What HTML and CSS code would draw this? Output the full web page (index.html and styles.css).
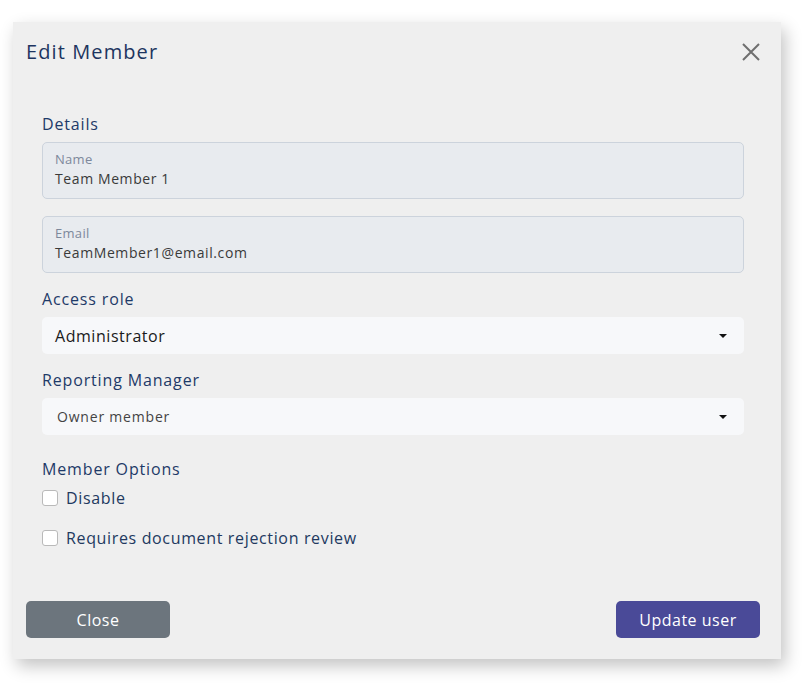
FILE: index.html
```html
<!DOCTYPE html>
<html lang="en">
<head>
  <meta charset="UTF-8" />
  <meta name="viewport" content="width=device-width, initial-scale=1.0"/>
  <title>Edit Member</title>
  <link rel="stylesheet" href="styles.css">
</head>
<body>

  <!-- Edit member modal -->
  <div class="modal">
    <div class="modal-header">
      <h2 class="modal-title">Edit Member</h2>
      <button class="close-x" aria-label="Close">
        <svg width="20" height="20" viewBox="0 0 20 20">
          <path d="M2 2 L18 18 M18 2 L2 18" stroke="#6f6f6f" stroke-width="2" fill="none"/>
        </svg>
      </button>
    </div>

    <div class="modal-body">
      <div class="section-label first">Details</div>

      <div class="field">
        <div class="field-label">Name</div>
        <div class="field-value">Team Member 1</div>
      </div>

      <div class="field">
        <div class="field-label">Email</div>
        <div class="field-value">TeamMember1@email.com</div>
      </div>

      <div class="section-label">Access role</div>
      <div class="select big">
        <span>Administrator</span>
        <span class="caret"></span>
      </div>

      <div class="section-label">Reporting Manager</div>
      <div class="select">
        <span>Owner member</span>
        <span class="caret"></span>
      </div>

      <div class="section-label options">Member Options</div>
      <label class="check">
        <span class="box"></span>
        Disable
      </label>
      <label class="check">
        <span class="box"></span>
        Requires document rejection review
      </label>
    </div>

    <div class="modal-footer">
      <button class="btn btn-grey">Close</button>
      <button class="btn btn-purple">Update user</button>
    </div>
  </div>

</body>
</html>
```

FILE: styles.css
```css
html {
  background: #ffffff;
}

body {
  margin: 0;
  padding: 22px 0 32px 13px;
  background: #ffffff;
  font-family: 'Open Sans', 'Noto Sans', sans-serif;
}

.modal {
  width: 768px;
  height: 637px;
  background: #efefef;
  box-shadow: 4px 7px 16px rgba(0, 0, 0, 0.24);
  display: flex;
  flex-direction: column;
  box-sizing: border-box;
}

.modal-header {
  display: flex;
  align-items: center;
  justify-content: space-between;
  padding: 16px 20px 0 13px;
  height: 28px;
}

.modal-title {
  margin: 0;
  font-size: 20px;
  font-weight: 500;
  color: #1d3560;
  letter-spacing: 1.1px;
  line-height: 28px;
}

.close-x {
  border: none;
  background: none;
  padding: 0;
  width: 20px;
  height: 20px;
  cursor: pointer;
}

.modal-body {
  padding: 0 37px 0 29px;
}

.section-label {
  font-size: 16px;
  color: #1e3a68;
  line-height: 20px;
  letter-spacing: 0.85px;
  margin: 16px 0 8px;
}

.section-label.first {
  margin-top: 48px;
}

.section-label.options {
  margin-top: 24px;
  margin-bottom: 9px;
}

.field {
  height: 57px;
  box-sizing: border-box;
  background: #e8ebef;
  border: 1px solid #ccd3dc;
  border-radius: 5px;
  padding: 8px 12px 0;
}

.field + .field {
  margin-top: 17px;
}

.field-label {
  font-size: 13px;
  color: #7d889b;
  line-height: 16px;
  letter-spacing: 0.3px;
}

.field-value {
  font-size: 14px;
  color: #3a3a3a;
  line-height: 22px;
  margin-top: 1px;
  letter-spacing: 0.6px;
}

.select {
  height: 37px;
  background: #f7f8fa;
  border-radius: 5px;
  display: flex;
  align-items: center;
  justify-content: space-between;
  padding: 0 13px 0 15px;
  font-size: 14px;
  color: #444;
  letter-spacing: 0.8px;
}

.select.big {
  padding-left: 13px;
  font-size: 16px;
  color: #1a1a1a;
  letter-spacing: 0.55px;
}

.caret {
  width: 0;
  height: 0;
  border-left: 4px solid transparent;
  border-right: 4px solid transparent;
  border-top: 4px solid #111;
  margin-right: 4px;
}

.check {
  display: flex;
  align-items: center;
  gap: 8px;
  font-size: 16px;
  color: #22395f;
  letter-spacing: 0.65px;
  line-height: 20px;
  margin-bottom: 20px;
}

.box {
  width: 14px;
  height: 14px;
  background: #fff;
  border: 1px solid #b9b9b9;
  border-radius: 3px;
}

.modal-footer {
  margin-top: auto;
  display: flex;
  justify-content: space-between;
  padding: 0 21px 21px 13px;
}

.btn {
  width: 144px;
  height: 37px;
  border: none;
  border-radius: 5px;
  color: #fff;
  font-family: 'Open Sans', 'Noto Sans', sans-serif;
  font-size: 16px;
  letter-spacing: 0.5px;
  cursor: pointer;
}

.btn-grey {
  background: #6c757d;
}

.btn-purple {
  background: #4a4a98;
}
```
